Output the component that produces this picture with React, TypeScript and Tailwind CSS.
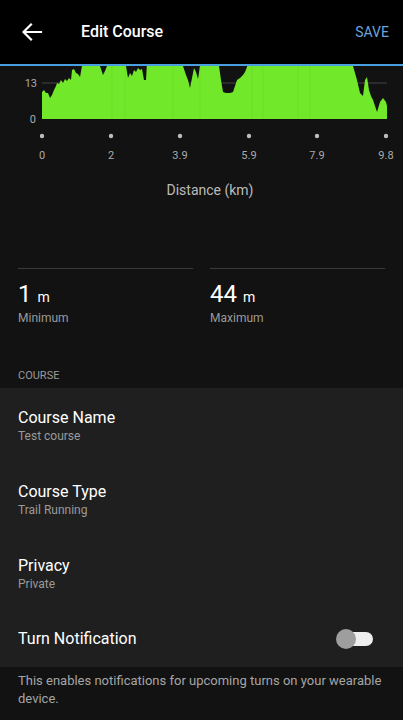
import React from 'react';

const profile: [number, number][] = [
  [42, 92], [44, 90], [46, 93], [48, 93], [50, 98], [52, 95], [54, 90], [56, 86], [57, 83], [59, 84],
  [61, 80], [63, 83], [65, 79], [67, 81], [69, 78], [71, 80], [72, 70], [74, 69], [76, 73], [78, 74],
  [80, 77], [82, 66], [84, 58], [98, 58], [100, 66], [102, 72], [103, 75], [105, 71], [107, 66], [109, 58],
  [124, 58], [126, 66], [128, 78], [130, 73], [132, 76], [134, 70], [136, 72], [138, 68], [140, 70], [142, 69],
  [144, 80], [146, 80], [147, 62], [181, 58], [183, 66], [186, 75], [188, 80], [190, 88], [192, 78], [194, 68],
  [196, 72], [198, 79], [200, 66], [202, 58], [217, 58], [219, 66], [221, 80], [223, 92], [226, 93], [230, 93],
  [233, 92], [235, 86], [237, 80], [240, 78], [243, 75], [245, 72], [247, 67], [249, 58], [351, 58], [353, 66],
  [357, 80], [360, 93], [363, 96], [365, 80], [367, 77], [369, 90], [371, 96], [373, 100], [375, 106], [377, 112],
  [380, 102], [383, 98], [386, 102], [387, 106], [387, 119], [42, 119],
];

const ticks = [
  { x: 42, label: '0' },
  { x: 111, label: '2' },
  { x: 180, label: '3.9' },
  { x: 249, label: '5.9' },
  { x: 317, label: '7.9' },
  { x: 386, label: '9.8' },
];

const rows = [
  { title: 'Course Name', sub: 'Test course' },
  { title: 'Course Type', sub: 'Trail Running' },
  { title: 'Privacy', sub: 'Private' },
];

const ElevationChart = () => (
  <svg width="403" height="100" viewBox="0 66 403 100" className="block">
    <line x1="42" y1="83" x2="387" y2="83" stroke="#444" strokeWidth="1" />
    <polygon points={profile.map(p => p.join(',')).join(' ')} fill="#72e82a" />
    {[112, 125, 173, 200, 252, 263, 298, 310].map(x => (
      <line key={x} x1={x} y1="66" x2={x} y2="119" stroke="#62cc22" strokeWidth="0.6" opacity="0.5" />
    ))}
    <text x="37" y="87" textAnchor="end" fontSize="11" fill="#aaa" fontFamily="Roboto, sans-serif">13</text>
    <text x="36" y="123" textAnchor="end" fontSize="11" fill="#aaa" fontFamily="Roboto, sans-serif">0</text>
    {ticks.map(t => (
      <g key={t.x}>
        <circle cx={t.x} cy="136" r="2.2" fill="#bdbdbd" />
        <text x={t.x} y="159" textAnchor="middle" fontSize="11" fill="#aaa" fontFamily="Roboto, sans-serif">
          {t.label}
        </text>
      </g>
    ))}
  </svg>
);

const Stat = ({ value, label }: { value: string; label: string }) => (
  <div>
    <div className="h-px bg-[#3a3a3a]" />
    <div className="mt-[11px] flex items-baseline gap-[6px] text-white">
      <span className="text-[24px] leading-[28px]">{value}</span>
      <span className="text-[14px]">m</span>
    </div>
    <div className="mt-[2px] text-[12px] leading-4 text-[#9a9a9a]">{label}</div>
  </div>
);

export default function App() {
  return (
    <div className="w-[403px] h-[720px] overflow-hidden bg-[#121212] font-['Roboto',sans-serif]">
      <header className="h-16 bg-black flex items-center pl-[21px] pr-[14px]">
        <svg width="22" height="20" viewBox="0 0 22 20" className="shrink-0">
          <path d="M20 10H3M10 2.5L2.5 10l7.5 7.5" stroke="#fff" strokeWidth="2.2" fill="none" strokeLinecap="square" />
        </svg>
        <h1 className="ml-[38px] text-[16px] font-medium text-white">Edit Course</h1>
        <button className="ml-auto text-[14px] text-[#6fa3dd]">SAVE</button>
      </header>
      <div className="h-[2px] bg-[#4a9fe0]" />

      <ElevationChart />
      <div className="mt-[14px] pl-[17px] text-center text-[14px] leading-5 text-[#bbb]">Distance (km)</div>

      <div className="mt-[68px] grid grid-cols-2 gap-[17px] px-[18px]">
        <Stat value="1" label="Minimum" />
        <Stat value="44" label="Maximum" />
      </div>

      <div className="mt-[43px] mb-[5px] px-[18px] text-[11px] leading-[14px] text-[#9a9a9a]">COURSE</div>

      <div className="bg-[#1f1f1f]">
        {rows.map(r => (
          <div key={r.title} className="h-[74px] px-[18px] pt-5">
            <div className="text-[16px] leading-5 text-white">{r.title}</div>
            <div className="text-[12px] leading-4 text-[#9a9a9a]">{r.sub}</div>
          </div>
        ))}
        <div className="h-[57px] px-[18px] flex items-center justify-between">
          <span className="text-[16px] text-white">Turn Notification</span>
          <div className="relative mr-[12px] w-[34px] h-[14px] rounded-full bg-[#eeeeee]">
            <div className="absolute -left-[3px] -top-[3px] w-5 h-5 rounded-full bg-[#9e9e9e]" />
          </div>
        </div>
      </div>

      <p className="px-[18px] pt-[5px] text-[13px] leading-[18px] text-[#a5a5a5]">
        This enables notifications for upcoming turns on your wearable device.
      </p>
    </div>
  );
}
